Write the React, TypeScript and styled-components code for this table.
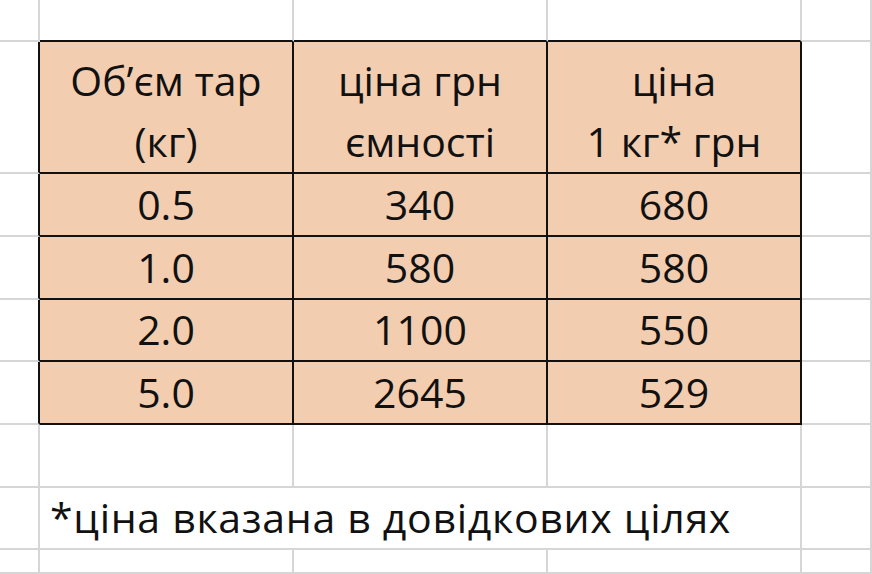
import { Fragment } from "react";
import styled, { createGlobalStyle, css } from "styled-components";

const GlobalStyle = createGlobalStyle`
  html, body {
    margin: 0;
    padding: 0;
    background: #ffffff;
  }
  body {
    font-family: "Open Sans", "Noto Sans", sans-serif;
    color: #111111;
  }
`;

const GRID = "#d6d6d6";
const EDGE = "#111111";
const FILL = "#f3cdaf";

const Sheet = styled.div`
  display: grid;
  grid-template-columns: 40px 254px 254px 254px 1fr;
  grid-template-rows: 42px 132px 63px 63px 62px 63px 63px 62px 1fr;
  width: 872px;
  height: 574px;
  overflow: hidden;
`;

type CellProps = {
  $filled?: boolean;
  $edgeRight?: boolean;
  $edgeBottom?: boolean;
  $note?: boolean;
};

const Cell = styled.div<CellProps>`
  box-sizing: border-box;
  display: flex;
  flex-direction: column;
  justify-content: flex-end;
  align-items: center;
  border-right: 2px solid ${({ $edgeRight }) => ($edgeRight ? EDGE : GRID)};
  border-bottom: 2px solid ${({ $edgeBottom }) => ($edgeBottom ? EDGE : GRID)};
  background: ${({ $filled }) => ($filled ? FILL : "#ffffff")};
  font-size: 41px;
  line-height: 61px;
  white-space: nowrap;
  ${({ $note }) =>
    $note &&
    css`
      grid-column: 2 / span 3;
      align-items: flex-start;
      padding-left: 10px;
      letter-spacing: 0.7px;
    `}
`;

const Line = styled.span`
  display: block;
`;

const header = [
  ["Об’єм тар", "(кг)"],
  ["ціна грн", "ємності"],
  ["ціна", "1 кг* грн"],
];

const rows = [
  ["0.5", "340", "680"],
  ["1.0", "580", "580"],
  ["2.0", "1100", "550"],
  ["5.0", "2645", "529"],
];

const BlankRow = () => (
  <>
    <Cell />
    <Cell />
    <Cell />
    <Cell />
    <Cell />
  </>
);

const App = () => {
  return (
    <>
      <GlobalStyle />
      <Sheet>
        {/* row above the table */}
        <Cell />
        <Cell $edgeBottom />
        <Cell $edgeBottom />
        <Cell $edgeBottom />
        <Cell />

        {/* header row */}
        <Cell $edgeRight />
        {header.map((lines, i) => (
          <Cell key={i} $filled $edgeRight $edgeBottom>
            {lines.map((l) => (
              <Line key={l}>{l}</Line>
            ))}
          </Cell>
        ))}
        <Cell />

        {rows.map((row, r) => (
          <Fragment key={r}>
            <Cell $edgeRight />
            {row.map((value, c) => (
              <Cell key={c} $filled $edgeRight $edgeBottom>
                {value}
              </Cell>
            ))}
            <Cell />
          </Fragment>
        ))}

        <BlankRow />

        {/* footnote row */}
        <Cell />
        <Cell $note>*ціна вказана в довідкових цілях</Cell>
        <Cell />

        <BlankRow />
      </Sheet>
    </>
  );
};

export default App;
